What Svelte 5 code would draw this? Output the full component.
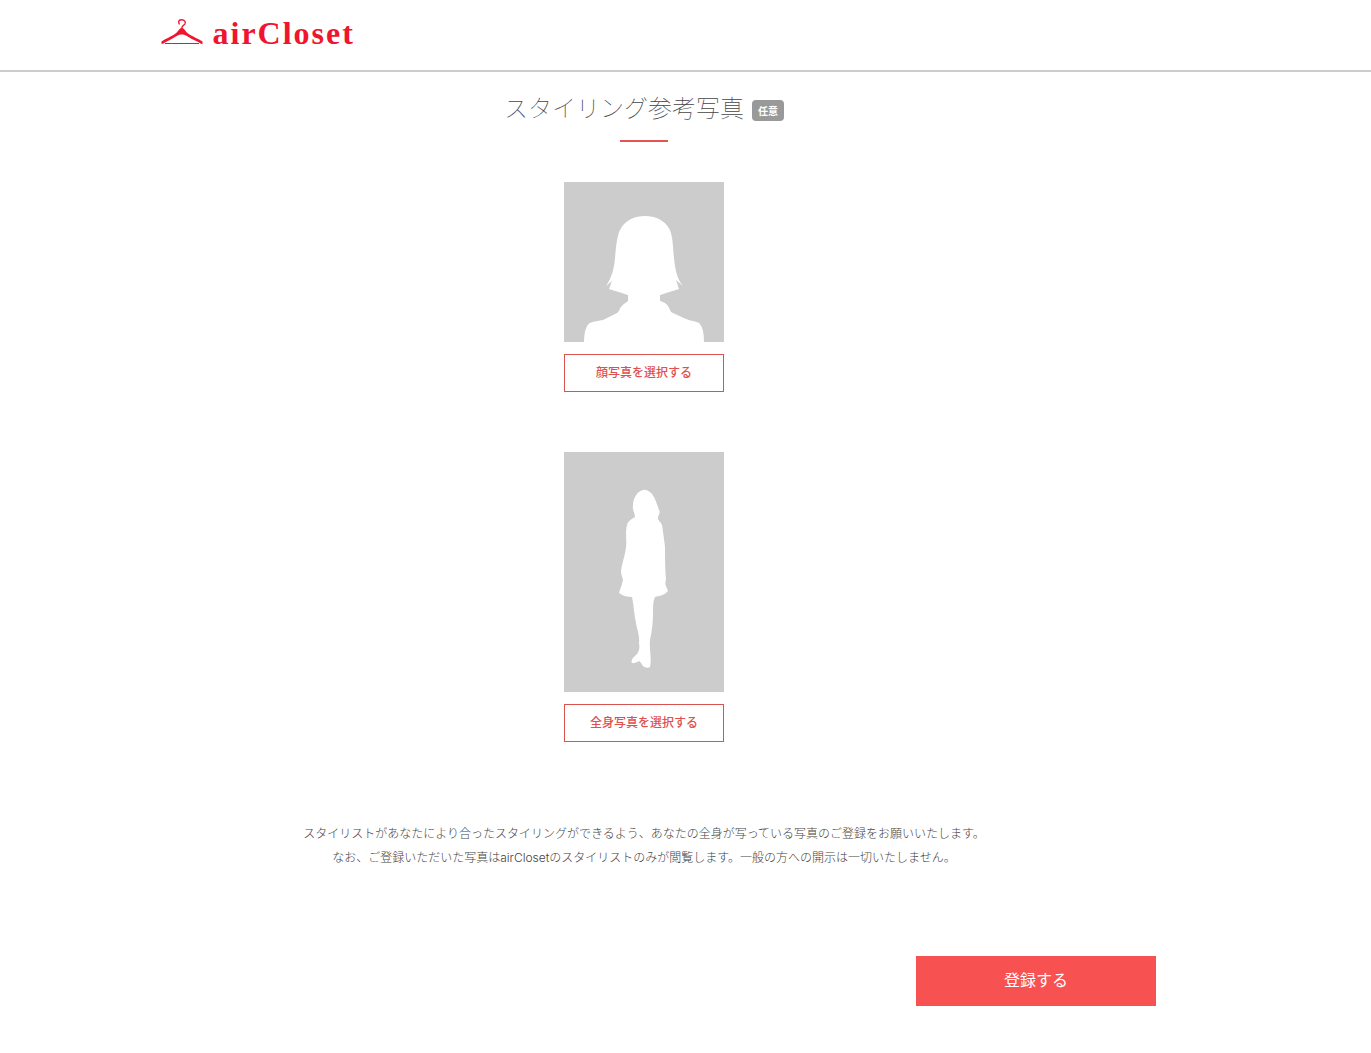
<script lang="ts">
  interface Photo {
    id: 'face' | 'body';
    height: number;
    label: string;
    alt: string;
    path: string;
  }

  const photos: Photo[] = [
    {
      id: 'face',
      height: 160,
      label: '顔写真を選択する',
      alt: '顔写真',
      path: 'M20 160C20 151 22 143 26 141C30 139 35 139 39 138L53 131C56 129 55 126 58 124C60 121 62 121 64 119V113L45 107L48 99L42 104C48 95 50 87 51 76C52 65 53 54 56 48C61 38 71 34 81 34C91 34 101 38 106 48C109 56 109 66 110 76C111 87 113 97 119 104L112 98L115 107L96 113V119C99 120 102 121 104 124C106 127 106 130 109 131L122 137C127 139 131 139 135 141C139 145 140 152 140 160Z',
    },
    {
      id: 'body',
      height: 240,
      label: '全身写真を選択する',
      alt: '全身写真',
      path: 'M79 38C73 39 69 47 69 53C68 58 71 61 71 65C68 67 64 69 63 73C61 81 63 88 62 95C61 105 57 113 57 121L59 128C58 133 56 137 55 141C59 144 64 145 68 145C70 154 70 163 72 171C73 178 76 184 75 191C76 196 75 199 73 202C70 205 68 206 68 208C66 212 70 212 75 209C77 210 78 213 79 214C81 216 84 216 86 215C88 207 85 197 86 188C88 179 89 170 89 161C89 155 89 149 91 145C95 144 101 143 104 139C103 136 100 132 102 128C101 117 101 106 101 95C100 87 99 79 98 73C97 70 94 69 94 66C94 63 97 61 95 58C93 52 91 46 88 42C85 39 82 37 79 38Z',
    },
  ];
</script>

<header class="header">
  <div class="header__inner">
    <a class="logo" href="/" aria-label="airCloset">
      <svg class="logo__mark" viewBox="0 0 42 27" aria-hidden="true">
        <path
          d="M18.2 4.9C16.7 2 18.5.8 20.7.8C23.5.8 25 3 23.9 5C22.9 6.6 20.9 6.1 20.8 9.5"
          fill="none"
          stroke="currentColor"
          stroke-width="1.4"
          stroke-linecap="round"
        />
        <path
          d="M.5 25V22.6C1 21.2 12 17.2 16 13.2C18 11 19 9 20.8 9C22.6 9 23.6 11 25.6 13.2C29.6 17.2 41 21.2 41.5 22.6V25.2L39.5 24.4C36 22 31 20.5 27.5 18C24.5 15.6 22.5 15.4 20.8 15.4C19 15.4 17 15.6 14 18C10.5 20.5 5 22.4 2.5 24.4Z"
          fill="currentColor"
        />
        <path d="M4 24.5H38" stroke="currentColor" stroke-width="1" />
      </svg>
      <span class="logo__text">airCloset</span>
    </a>
  </div>
</header>

<main class="main">
  <form class="form" onsubmit={(event) => event.preventDefault()}>
    <div class="heading">
      <h1 class="heading__title">スタイリング参考写真</h1>
      <span class="heading__badge">任意</span>
    </div>

    {#each photos as photo (photo.id)}
      <section class="photo">
        <svg class="photo__preview" viewBox={`0 0 160 ${photo.height}`} role="img" aria-label={photo.alt}>
          <path d={photo.path} fill="#fff" />
        </svg>
        <button class="photo__button" type="button">{photo.label}</button>
      </section>
    {/each}

    <p class="note">
      スタイリストがあなたにより合ったスタイリングができるよう、あなたの全身が写っている写真のご登録をお願いいたします。<br />
      なお、ご登録いただいた写真はairClosetのスタイリストのみが閲覧します。一般の方への開示は一切いたしません。
    </p>

    <button class="submit" type="submit">登録する</button>
  </form>
</main>

<style>
  :global(body) {
    margin: 0;
    background: #fff;
    color: #444;
    font-family: 'Noto Sans CJK JP', sans-serif;
  }

  .header {
    border-bottom: 2px solid #ccc;
  }

  .header__inner {
    display: flex;
    max-width: 1050px;
    height: 70px;
    margin: 0 auto;
  }

  .logo {
    display: flex;
    align-items: flex-start;
    gap: 10px;
    padding-top: 19px;
    color: #f0142f;
    text-decoration: none;
  }

  .logo__mark {
    width: 42px;
    height: 27px;
  }

  .logo__text {
    font-family: 'Liberation Serif', serif;
    font-size: 32px;
    font-weight: 700;
    line-height: 28px;
    letter-spacing: 2px;
  }

  .main {
    padding: 20px 83px 48px 0;
  }

  .form {
    display: flex;
    flex-direction: column;
    align-items: center;
    max-width: 1024px;
    margin: 0 auto;
  }

  .heading {
    display: flex;
    flex-wrap: wrap;
    align-items: flex-end;
    justify-content: center;
    column-gap: 8px;
    margin-bottom: 40px;
  }

  /* short rule on its own line under the title */
  .heading::after {
    content: '';
    flex: none;
    width: 48px;
    height: 2px;
    margin: 19px 50% 0;
    background: #e25555;
  }

  .heading__title {
    margin: 0;
    font-size: 24px;
    font-weight: 100;
    line-height: 29px;
  }

  .heading__badge {
    padding: 0 6px;
    border-radius: 4px;
    background: #999;
    color: #fff;
    font-size: 10px;
    font-weight: 700;
    line-height: 21px;
  }

  .photo {
    display: flex;
    flex-direction: column;
    gap: 12px;
    width: 160px;
    margin-bottom: 60px;
  }

  .photo__preview {
    display: block;
    width: 100%;
    background: #ccc;
  }

  .photo__button {
    height: 38px;
    padding: 0 0 3px;
    border: 1px solid #d9534f;
    background: #fff;
    color: #e05050;
    font: inherit;
    font-size: 12px;
    font-weight: 500;
    cursor: pointer;
  }

  .note {
    margin: 20px 0 86px;
    font-family: Inter, 'Noto Sans CJK JP', sans-serif;
    font-size: 12px;
    font-weight: 300;
    line-height: 24px;
    text-align: center;
  }

  .submit {
    align-self: flex-end;
    width: 240px;
    height: 50px;
    padding: 0 0 4px;
    border: 0;
    background: #f75151;
    color: #fff;
    font: inherit;
    font-size: 16px;
    cursor: pointer;
  }
</style>
